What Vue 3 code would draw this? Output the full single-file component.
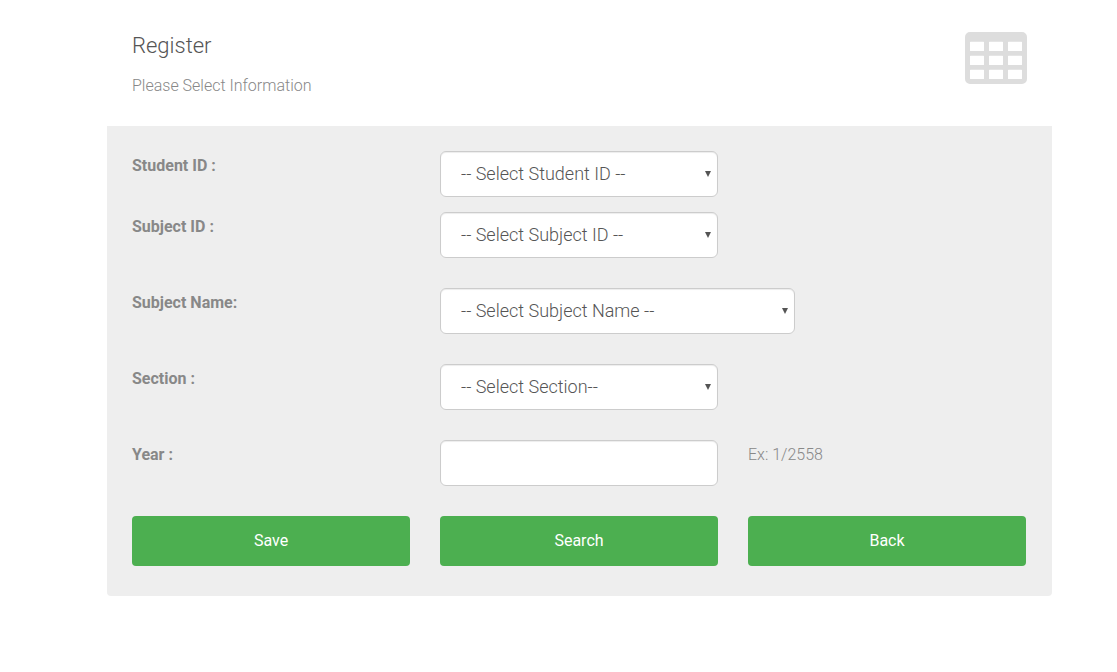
<script setup>
import { reactive } from 'vue'

const form = reactive({ student: '', subject: '', name: '', section: '', year: '' })

const selects = [
  { key: 'student', label: 'Student ID :', prompt: '-- Select Student ID --', tight: true },
  { key: 'subject', label: 'Subject ID :', prompt: '-- Select Subject ID --' },
  { key: 'name', label: 'Subject Name:', prompt: '-- Select Subject Name --', wide: true },
  { key: 'section', label: 'Section :', prompt: '-- Select Section--' },
]
</script>

<template>
  <main class="register">
    <header class="top">
      <div>
        <h1>Register</h1>
        <p>Please Select Information</p>
      </div>
      <svg class="table-icon" viewBox="0 0 62 52" aria-hidden="true">
        <path
          fill-rule="evenodd"
          d="M5 0H57a5 5 0 0 1 5 5V47a5 5 0 0 1-5 5H5a5 5 0 0 1-5-5V5a5 5 0 0 1 5-5ZM5.5 9.700a.5 .5 0 0 0-.5 .5v8.300a.5 .5 0 0 0 .5 .5h13a.5 .5 0 0 0 .5-.5v-8.300a.5 .5 0 0 0-.5-.5ZM24.500 9.700a.5 .5 0 0 0-.5 .5v8.300a.5 .5 0 0 0 .5 .5h13a.5 .5 0 0 0 .5-.5v-8.300a.5 .5 0 0 0-.5-.5ZM43.500 9.700a.5 .5 0 0 0-.5 .5v8.300a.5 .5 0 0 0 .5 .5h13a.5 .5 0 0 0 .5-.5v-8.300a.5 .5 0 0 0-.5-.5ZM5.500 23.700a.5 .5 0 0 0-.5 .5v8.300a.5 .5 0 0 0 .5 .5h13a.5 .5 0 0 0 .5-.5v-8.300a.5 .5 0 0 0-.5-.5ZM24.500 23.700a.5 .5 0 0 0-.5 .5v8.300a.5 .5 0 0 0 .5 .5h13a.5 .5 0 0 0 .5-.5v-8.300a.5 .5 0 0 0-.5-.5ZM43.500 23.700a.5 .5 0 0 0-.5 .5v8.300a.5 .5 0 0 0 .5 .5h13a.5 .5 0 0 0 .5-.5v-8.300a.5 .5 0 0 0-.5-.5ZM5.500 37.700a.5 .5 0 0 0-.5 .5v8.300a.5 .5 0 0 0 .5 .5h13a.5 .5 0 0 0 .5-.5v-8.300a.5 .5 0 0 0-.5-.5ZM24.500 37.700a.5 .5 0 0 0-.5 .5v8.300a.5 .5 0 0 0 .5 .5h13a.5 .5 0 0 0 .5-.5v-8.300a.5 .5 0 0 0-.5-.5ZM43.500 37.700a.5 .5 0 0 0-.5 .5v8.300a.5 .5 0 0 0 .5 .5h13a.5 .5 0 0 0 .5-.5v-8.300a.5 .5 0 0 0-.5-.5Z"
        />
      </svg>
    </header>

    <form class="panel" @submit.prevent>
      <div v-for="s in selects" :key="s.key" class="row" :class="{ tight: s.tight }">
        <label :for="s.key">{{ s.label }}</label>
        <div class="field" :class="{ wide: s.wide }">
          <select :id="s.key" v-model="form[s.key]" class="control">
            <option value="">{{ s.prompt }}</option>
          </select>
          <svg class="arrow" viewBox="0 0 6 6" aria-hidden="true"><path d="M0 0H6L3 6Z" /></svg>
        </div>
      </div>
      <div class="row">
        <label for="year">Year :</label>
        <div class="field">
          <input id="year" v-model="form.year" class="control" type="text" aria-describedby="year-hint" />
        </div>
        <span id="year-hint" class="hint">Ex: 1/2558</span>
      </div>
      <div class="row actions">
        <button type="submit">Save</button>
        <button type="button">Search</button>
        <button type="button">Back</button>
      </div>
    </form>
  </main>
</template>

<style>
body {
  background: #fff;
}
</style>

<style scoped>
.register {
  margin: 0 65px 0 107px;
  font-family: Roboto, "Liberation Sans", sans-serif;
  font-size: 16px;
  font-weight: 300;
  line-height: 30px;
  color: #888;
}
.top {
  display: flex;
  justify-content: space-between;
  align-items: flex-start;
  padding: 32px 25px 25px;
}
h1 {
  margin: 0 0 12px;
  font-size: 22px;
  font-weight: 300;
  line-height: 27px;
  color: #555;
}
p {
  margin: 0;
}
.table-icon {
  width: 62px;
  height: 52px;
  fill: #ddd;
}
.panel {
  padding: 25px 26px 30px 25px;
  background: #eee;
  border-radius: 0 0 4px 4px;
}
.row {
  display: grid;
  grid-template-columns: repeat(12, minmax(0, 1fr));
  column-gap: 30px;
  margin-bottom: 30px;
}
.row.tight {
  margin-bottom: 15px;
}
label {
  grid-column: span 4;
  font-weight: 700;
}
.field {
  grid-column: span 4;
  position: relative;
}
.field.wide {
  grid-column: span 5;
}
.control {
  display: block;
  box-sizing: border-box;
  width: 100%;
  height: 46px;
  margin: 0;
  padding: 0 20px;
  border: 1px solid #ccc;
  border-radius: 6px;
  background: #fff;
  box-shadow: inset 0 1px 1px rgba(0, 0, 0, 0.075);
  font: inherit;
  font-size: 18px;
  color: #555;
  appearance: none;
}
.arrow {
  position: absolute;
  top: 20px;
  right: 7px;
  width: 6px;
  height: 6px;
  fill: #555;
  pointer-events: none;
}
.hint {
  grid-column: span 4;
}
.actions {
  margin-bottom: 0;
}
button {
  grid-column: span 4;
  height: 50px;
  margin: 0;
  padding: 0 20px;
  border: 0;
  border-radius: 4px;
  background: #4caf50;
  font: inherit;
  font-weight: 400;
  color: #fff;
  cursor: pointer;
}
</style>
